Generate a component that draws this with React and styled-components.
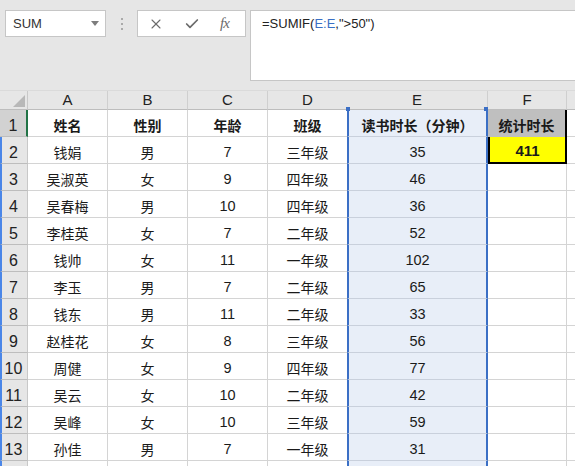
import React from "react";
import styled, { createGlobalStyle } from "styled-components";
import { X, Check } from "lucide-react";

const Global = createGlobalStyle`
  html, body { margin: 0; padding: 0; }
  body {
    width: 575px; height: 466px; overflow: hidden;
    background: #e6e6e6;
    font-family: "Liberation Sans", "Noto Sans CJK SC", sans-serif;
  }
  * { box-sizing: border-box; }
`;

const Page = styled.div`
  width: 575px;
  height: 466px;
  display: flex;
  flex-direction: column;
  overflow: hidden;
`;

const Toolbar = styled.div`
  height: 91px;
  flex-shrink: 0;
  display: flex;
  align-items: flex-start;
  padding: 10px 0 0 5px;
  border-bottom: 1px solid #dadada;
`;

const NameBox = styled.div`
  width: 101px;
  height: 27px;
  background: #fff;
  border: 1px solid #c6c6c6;
  display: flex;
  align-items: center;
  justify-content: space-between;
  padding: 0 6px 0 7px;
  font-size: 13px;
  color: #333;
`;

const DropTri = styled.span`
  width: 0;
  height: 0;
  border-left: 4px solid transparent;
  border-right: 4px solid transparent;
  border-top: 5px solid #7d7d7d;
`;

const Dots = styled.div`
  width: 31px;
  height: 27px;
  display: flex;
  flex-direction: column;
  align-items: center;
  justify-content: center;
  gap: 3px;
  span {
    width: 2px;
    height: 2px;
    background: #aaa;
  }
`;

const FxBox = styled.div`
  width: 109px;
  height: 27px;
  background: #fff;
  border: 1px solid #c6c6c6;
  display: flex;
  align-items: center;
  gap: 20px;
  padding: 0 0 0 10px;
  color: #6b6b6b;
`;

const FxText = styled.span`
  font-family: "Liberation Serif", serif;
  font-style: italic;
  font-size: 15px;
  color: #6b6b6b;
  letter-spacing: -1px;
`;

const FormulaBar = styled.div`
  flex: 1;
  height: 71px;
  margin-left: 4px;
  background: #fff;
  border: 1px solid #c6c6c6;
  border-right: none;
  padding: 5px 0 0 11px;
  font-size: 13px;
  color: #222;
`;

const Ref = styled.span`
  color: #3a6fc4;
`;

const Grid = styled.div`
  display: grid;
  grid-template-columns: 28px 80px 80px 80px 79px 141px 79px 1fr;
  grid-auto-rows: 27px;
  grid-template-rows: 19px;
  background: #fff;
`;

const Corner = styled.div`
  position: relative;
  background: #e6e6e6;
  border-right: 1px solid #c8c8c8;
  border-bottom: 1px solid #bdbdbd;
  &::after {
    content: "";
    position: absolute;
    right: 2px;
    bottom: 2px;
    width: 0;
    height: 0;
    border-left: 12px solid transparent;
    border-bottom: 12px solid #b8b8b8;
  }
`;

const ColHead = styled.div`
  position: relative;
  background: #e6e6e6;
  border-right: ${(p) => (p.$noRight ? "none" : "1px solid #cfcfcf")};
  border-bottom: 1px solid #bdbdbd;
  display: flex;
  justify-content: center;
  align-items: flex-end;
  padding-bottom: 1px;
  font-size: 15px;
  color: #222;
  ${(p) =>
    p.$handles &&
    `
    &::before, &::after {
      content: "";
      position: absolute;
      bottom: -2px;
      width: 4px;
      height: 4px;
      background: #3b6fc5;
      z-index: 2;
    }
    &::before { left: -1px; }
    &::after { right: -1px; }
  `}
`;

const RowHead = styled.div`
  background: ${(p) => (p.$active ? "#d2d2d2" : "#e6e6e6")};
  border-right: ${(p) => (p.$active ? "2px solid #217346" : "1px solid #c8c8c8")};
  border-bottom: 1px solid #bdbdbd;
  border-left: ${(p) => (p.$edge ? "2px solid #4a86e8" : "none")};
  display: flex;
  justify-content: center;
  align-items: flex-end;
  padding-bottom: 1px;
  padding-right: ${(p) => (p.$edge ? "2px" : "0")};
  font-size: 16px;
  color: #222;
`;

const Cell = styled.div`
  background: ${(p) => p.$bg || "#fff"};
  border-right: ${(p) => (p.$noRight ? "none" : "1px solid #d4d4d4")};
  border-bottom: 1px solid #d4d4d4;
  display: flex;
  justify-content: center;
  align-items: center;
  padding-top: 3px;
  font-family: "Noto Sans CJK SC", "Liberation Sans", sans-serif;
  font-size: 14px;
  font-weight: ${(p) => (p.$bold ? 700 : 400)};
  color: #1a1a1a;
  white-space: nowrap;
`;

const NumCell = styled(Cell)`
  font-family: "Liberation Sans", "Noto Sans CJK SC", sans-serif;
  font-size: 14.5px;
`;

const SelCell = styled(Cell)`
  background: #e8eef8;
  border-left: 2px solid #3b6fc5;
  border-right: 2px solid #3b6fc5;
  border-bottom: 1px solid #c9d0dc;
`;

const SelNum = styled(SelCell)`
  font-family: "Liberation Sans", "Noto Sans CJK SC", sans-serif;
  font-size: 14.5px;
`;

const StatCell = styled(Cell)`
  border-right: 2px solid #000;
  border-left: ${(p) => (p.$boxed ? "2px solid #000" : "none")};
  border-bottom: ${(p) => (p.$boxed ? "2px solid #000" : "none")};
  padding-top: ${(p) => (p.$boxed ? "2px" : "3px")};
`;

const StatNum = styled(StatCell)`
  font-family: "Liberation Sans", "Noto Sans CJK SC", sans-serif;
  font-size: 15px;
`;

const rows = [
  ["钱娟", "男", 7, "三年级", 35],
  ["吴淑英", "女", 9, "四年级", 46],
  ["吴春梅", "男", 10, "四年级", 36],
  ["李桂英", "女", 7, "二年级", 52],
  ["钱帅", "女", 11, "一年级", 102],
  ["李玉", "男", 7, "二年级", 65],
  ["钱东", "男", 11, "二年级", 33],
  ["赵桂花", "女", 8, "三年级", 56],
  ["周健", "女", 9, "四年级", 77],
  ["吴云", "女", 10, "二年级", 42],
  ["吴峰", "女", 10, "三年级", 59],
  ["孙佳", "男", 7, "一年级", 31],
];

export default function App() {
  return (
    <Page>
      <Global />
      <Toolbar>
        <NameBox>
          <span>SUM</span>
          <DropTri />
        </NameBox>
        <Dots>
          <span />
          <span />
          <span />
        </Dots>
        <FxBox>
          <X size={16} strokeWidth={1.6} />
          <Check size={16} strokeWidth={2.6} />
          <FxText>fx</FxText>
        </FxBox>
        <FormulaBar>
          =SUMIF(<Ref>E:E</Ref>,"&gt;50")
        </FormulaBar>
      </Toolbar>
      <Grid>
        <Corner />
        <ColHead>A</ColHead>
        <ColHead>B</ColHead>
        <ColHead>C</ColHead>
        <ColHead $noRight>D</ColHead>
        <ColHead $handles>E</ColHead>
        <ColHead>F</ColHead>
        <ColHead $noRight />

        <RowHead $active>1</RowHead>
        <Cell $bold>姓名</Cell>
        <Cell $bold>性别</Cell>
        <Cell $bold>年龄</Cell>
        <Cell $bold $noRight>班级</Cell>
        <SelCell $bold>读书时长（分钟）</SelCell>
        <StatCell $bold $bg="#bfbfbf">统计时长</StatCell>
        <Cell $noRight />

        {rows.map((r, i) => (
          <React.Fragment key={i}>
            <RowHead $edge>{i + 2}</RowHead>
            <Cell>{r[0]}</Cell>
            <Cell>{r[1]}</Cell>
            <NumCell>{r[2]}</NumCell>
            <Cell $noRight>{r[3]}</Cell>
            <SelNum>{r[4]}</SelNum>
            {i === 0 ? (
              <StatNum $bold $boxed $bg="#ffff00">411</StatNum>
            ) : (
              <Cell />
            )}
            <Cell $noRight />
          </React.Fragment>
        ))}

        <RowHead $edge />
        <Cell />
        <Cell />
        <Cell />
        <Cell $noRight />
        <SelCell />
        <Cell />
        <Cell $noRight />
      </Grid>
    </Page>
  );
}
